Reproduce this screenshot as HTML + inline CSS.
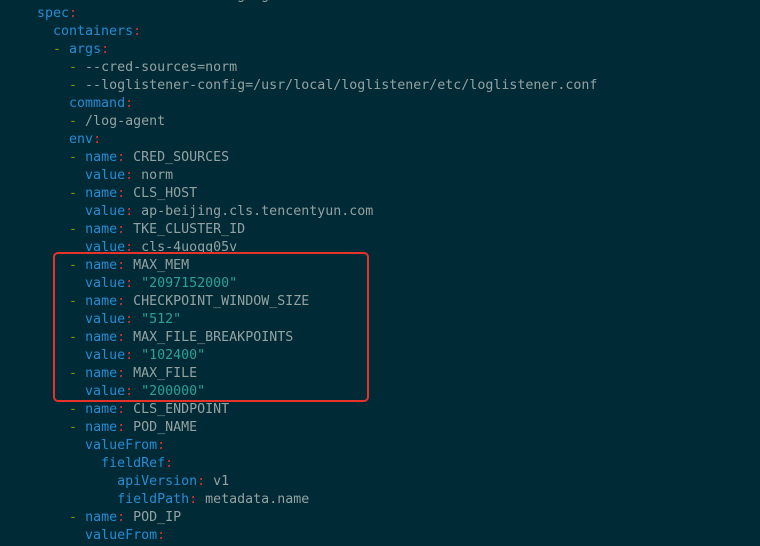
<!DOCTYPE html>
<html><head><meta charset="utf-8"><style>
html,body{margin:0;padding:0;background:#002b36;width:760px;height:546px;overflow:hidden}
pre{margin:0;position:absolute;left:37px;top:-13px;font-family:"DejaVu Sans Mono","Liberation Mono",monospace;font-size:13.3px;line-height:18px;color:#93a1a1}
.k{color:#268bd2}.c{color:#dc322f}.d{color:#859900}.s{color:#2aa198}
.box{position:absolute;left:53px;top:252px;width:312px;height:146px;border:2px solid #e5332a;border-radius:5px}
</style></head><body>
<pre>                         g  g
<span class="k">spec</span><span class="c">:</span>
  <span class="k">containers</span><span class="c">:</span>
  <span class="d">-</span> <span class="k">args</span><span class="c">:</span>
    <span class="d">-</span> --cred-sources=norm
    <span class="d">-</span> --loglistener-config=/usr/local/loglistener/etc/loglistener.conf
    <span class="k">command</span><span class="c">:</span>
    <span class="d">-</span> /log-agent
    <span class="k">env</span><span class="c">:</span>
    <span class="d">-</span> <span class="k">name</span><span class="c">:</span> CRED_SOURCES
      <span class="k">value</span><span class="c">:</span> norm
    <span class="d">-</span> <span class="k">name</span><span class="c">:</span> CLS_HOST
      <span class="k">value</span><span class="c">:</span> ap-beijing.cls.tencentyun.com
    <span class="d">-</span> <span class="k">name</span><span class="c">:</span> TKE_CLUSTER_ID
      <span class="k">value</span><span class="c">:</span> cls-4uoqq05v
    <span class="d">-</span> <span class="k">name</span><span class="c">:</span> MAX_MEM
      <span class="k">value</span><span class="c">:</span> <span class="s">"2097152000"</span>
    <span class="d">-</span> <span class="k">name</span><span class="c">:</span> CHECKPOINT_WINDOW_SIZE
      <span class="k">value</span><span class="c">:</span> <span class="s">"512"</span>
    <span class="d">-</span> <span class="k">name</span><span class="c">:</span> MAX_FILE_BREAKPOINTS
      <span class="k">value</span><span class="c">:</span> <span class="s">"102400"</span>
    <span class="d">-</span> <span class="k">name</span><span class="c">:</span> MAX_FILE
      <span class="k">value</span><span class="c">:</span> <span class="s">"200000"</span>
    <span class="d">-</span> <span class="k">name</span><span class="c">:</span> CLS_ENDPOINT
    <span class="d">-</span> <span class="k">name</span><span class="c">:</span> POD_NAME
      <span class="k">valueFrom</span><span class="c">:</span>
        <span class="k">fieldRef</span><span class="c">:</span>
          <span class="k">apiVersion</span><span class="c">:</span> v1
          <span class="k">fieldPath</span><span class="c">:</span> metadata.name
    <span class="d">-</span> <span class="k">name</span><span class="c">:</span> POD_IP
      <span class="k">valueFrom</span><span class="c">:</span>
</pre>
<div class="box"></div>
</body></html>
